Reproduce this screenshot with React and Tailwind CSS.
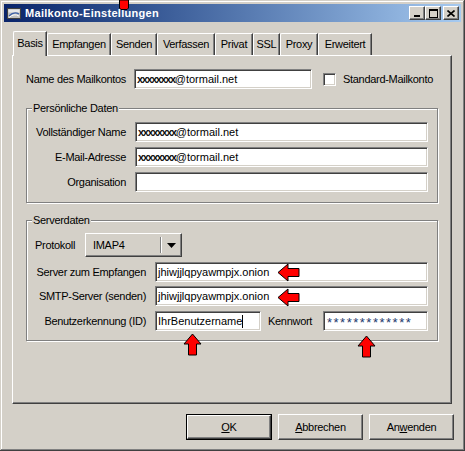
import React from "react";

const sunken =
  "border border-t-[#808080] border-l-[#808080] border-r-white border-b-white shadow-[inset_1px_1px_0_#404040,inset_-1px_-1px_0_#d4d0c8]";
const raised =
  "border border-t-white border-l-white border-r-[#404040] border-b-[#404040] shadow-[inset_-1px_-1px_0_#808080,inset_1px_1px_0_#d4d0c8]";

const tabs = [
  { label: "Basis", w: "w-[34px]", active: true },
  { label: "Empfangen", w: "w-[64px]" },
  { label: "Senden", w: "w-[46px]" },
  { label: "Verfassen", w: "w-[58px]" },
  { label: "Privat", w: "w-[38px]" },
  { label: "SSL", w: "w-[27px]" },
  { label: "Proxy", w: "w-[38px]" },
  { label: "Erweitert", w: "w-[54px]" },
];

export default function App() {
  return (
    <div className="relative w-[465px] h-[451px] bg-[#d4d0c8] p-1 flex flex-col text-[11px] tracking-[-0.3px] text-black font-['Liberation_Sans',Arial,sans-serif] shadow-[inset_-1px_-1px_0_#404040,inset_1px_1px_0_#d4d0c8,inset_-2px_-2px_0_#808080,inset_2px_2px_0_#fff] select-none">
      <TitleBar />

      {/* TABS */}
      <div className="relative z-10 mt-[9px] ml-[9px] flex items-end h-[24px]">
        {tabs.map((t) =>
          t.active ? (
            <div
              key={t.label}
              className={`${t.w} h-[25px] -mb-px bg-[#d4d0c8] border-t border-l border-white border-r border-r-[#404040] shadow-[inset_-1px_0_0_#808080] rounded-tl-[2px] flex items-center justify-center pb-[2px]`}
            >
              {t.label}
            </div>
          ) : (
            <div
              key={t.label}
              className={`${t.w} h-[22px] border-t border-l border-white border-r border-r-[#404040] shadow-[inset_-1px_0_0_#808080] rounded-tl-[2px] flex items-center justify-center whitespace-nowrap`}
            >
              {t.label}
            </div>
          )
        )}
      </div>

      {/* PANEL */}
      <div className="ml-[8px] w-[440px] h-[349px] border border-t-white border-l-white border-r-[#404040] border-b-[#404040] shadow-[inset_-1px_-1px_0_#808080] pt-[13px] pl-[13px]">
        <div className="flex items-center h-[20px]">
          <span className="w-[108px]">Name des Mailkontos</span>
          <TextField w="w-[178px]">
            <Masked />
            @tormail.net
          </TextField>
          <div className={`${sunken} ml-[11px] w-[13px] h-[13px] bg-white`} />
          <span className="ml-[7px]">Standard-Mailkonto</span>
        </div>

        {/* PERSÖNLICHE DATEN */}
        <GroupBox title="Persönliche Daten" className="mt-[19px] h-[95px] pt-[13px]">
          <div className="flex flex-col gap-[5px]">
            <FormRow label="Vollständiger Name">
              <TextField w="w-[293px]">
                <Masked />
                @tormail.net
              </TextField>
            </FormRow>
            <FormRow label="E-Mail-Adresse">
              <TextField w="w-[293px]">
                <Masked />
                @tormail.net
              </TextField>
            </FormRow>
            <FormRow label="Organisation">
              <TextField w="w-[293px]" />
            </FormRow>
          </div>
        </GroupBox>

        {/* SERVERDATEN */}
        <GroupBox title="Serverdaten" className="mt-[17px] h-[121px] pt-[12px]">
          <div className="flex items-center h-[24px]">
            <span className="w-[58px] pl-[8px]">Protokoll</span>
            <div className={`${raised} w-[97px] h-[24px] flex items-center`}>
              <span className="flex-1 pl-[7px]">IMAP4</span>
              <div className="w-px h-[16px] bg-[#808080] shadow-[1px_0_0_#fff]" />
              <div className="w-[20px] flex items-center justify-center">
                <svg width="9" height="5" viewBox="0 0 9 5">
                  <polygon points="0,0 9,0 4.5,5" fill="#000" />
                </svg>
              </div>
            </div>
          </div>

          <div className="mt-[5px] flex items-center h-[20px]">
            <span className="w-[119px] shrink-0 text-right whitespace-nowrap">Server zum Empfangen</span>
            <TextField w="w-[273px] ml-[9px]">jhiwjjlqpyawmpjx.onion</TextField>
          </div>
          <div className="mt-[4px] flex items-center h-[20px]">
            <span className="w-[119px] shrink-0 text-right whitespace-nowrap">SMTP-Server (senden)</span>
            <TextField w="w-[273px] ml-[9px]">jhiwjjlqpyawmpjx.onion</TextField>
          </div>
          <div className="mt-[5px] flex items-center h-[20px]">
            <span className="w-[119px] shrink-0 text-right whitespace-nowrap">Benutzerkennung (ID)</span>
            <TextField w="w-[106px] ml-[9px]">
              IhrBenutzername
              <span className="inline-block w-px h-[13px] bg-black" />
            </TextField>
            <span className="ml-[7px] w-[55px]">Kennwort</span>
            <TextField w="w-[105px]">
              <span className="pl-[1px] text-[13px] tracking-[1.5px] text-[#1c3a6e] leading-none pt-[3px]">
                *************
              </span>
            </TextField>
          </div>
        </GroupBox>
      </div>

      {/* BUTTONS */}
      <div className="mt-[10px] flex justify-end pr-[7px]">
        <div className="border border-black">
          <div className={`${raised} w-[84px] h-[24px] flex items-center justify-center`}>
            <span>
              <u>O</u>K
            </span>
          </div>
        </div>
        <div className={`${raised} ml-[6px] w-[85px] h-[26px] flex items-center justify-center`}>
          <span>
            <u>A</u>bbrechen
          </span>
        </div>
        <div className={`${raised} ml-[6px] w-[85px] h-[26px] flex items-center justify-center`}>
          <span>
            An<u>w</u>enden
          </span>
        </div>
      </div>

      {/* RED MARKER ARROWS */}
      <svg className="absolute left-[119px] top-0" width="10" height="10" viewBox="0 0 10 10">
        <polygon points="0.5,0 9.5,0 9.5,8 8,9.5 2,9.5 0.5,8" fill="#ff0000" stroke="#000" />
      </svg>
      <LeftArrow className="absolute left-[277px] top-[263px]" />
      <LeftArrow className="absolute left-[277px] top-[288px]" />
      <UpArrow className="absolute left-[183px] top-[333px]" />
      <UpArrow className="absolute left-[357px] top-[335px]" />
    </div>
  );
}

function TitleBar() {
  return (
    <div className="h-[18px] bg-linear-to-r from-[#0a246a] to-[#a6caf0] flex items-center pl-[2px] pr-[2px]">
      <svg width="16" height="16" viewBox="0 0 16 16">
        <rect x="1.5" y="3.5" width="13" height="10" fill="#c0c0c0" stroke="#404040" />
        <rect x="2.5" y="4.5" width="11" height="3" fill="#e8e8e8" />
        <path d="M3 11 Q8 6 13 9" stroke="#3a5fa8" strokeWidth="1.2" fill="none" />
        <path d="M3 12.5 Q8 8 13 11" stroke="#ffffff" strokeWidth="1" fill="none" />
      </svg>
      <span className="ml-[3px] text-white font-bold tracking-[0.3px] flex-1">Mailkonto-Einstellungen</span>
      <TitleButton>
        <svg width="8" height="8" viewBox="0 0 8 8">
          <rect x="1" y="6" width="6" height="2" fill="#000" />
        </svg>
      </TitleButton>
      <TitleButton>
        <svg width="9" height="9" viewBox="0 0 9 9">
          <rect x="0.5" y="0.5" width="8" height="8" fill="none" stroke="#000" />
          <rect x="0" y="0" width="9" height="2" fill="#000" />
        </svg>
      </TitleButton>
      <div className="w-[2px]" />
      <TitleButton>
        <svg width="8" height="7" viewBox="0 0 8 7">
          <path d="M0.5 0.5 L7.5 6.5 M7.5 0.5 L0.5 6.5" stroke="#000" strokeWidth="1.6" />
        </svg>
      </TitleButton>
    </div>
  );
}

function TitleButton({ children }) {
  return (
    <div className={`${raised} bg-[#d4d0c8] w-[16px] h-[14px] flex items-center justify-center`}>
      {children}
    </div>
  );
}

function GroupBox({ title, className, children }) {
  return (
    <div
      className={`relative w-[412px] border border-[#808080] shadow-[1px_1px_0_#fff,inset_1px_1px_0_#fff] ${className}`}
    >
      <span className="absolute left-[5px] -top-[8px] px-[1px] bg-[#d4d0c8] leading-[14px]">
        {title}
      </span>
      {children}
    </div>
  );
}

function FormRow({ label, children }) {
  return (
    <div className="flex items-center h-[20px]">
      <span className="w-[99px] shrink-0 text-right whitespace-nowrap">{label}</span>
      <div className="ml-[9px]">{children}</div>
    </div>
  );
}

function TextField({ w, children }) {
  return (
    <div
      className={`${sunken} ${w} h-[20px] bg-white flex items-center pl-[2px] tracking-normal whitespace-nowrap overflow-hidden`}
    >
      {children}
    </div>
  );
}

function Masked() {
  return <span className="font-bold tracking-[-1.4px] text-[#111]">xxxxxxxx</span>;
}

function LeftArrow({ className }) {
  return (
    <svg className={className} width="23" height="19" viewBox="0 0 23 19">
      <polygon points="1,9.5 11,1 11,5.5 22,5.5 22,13.5 11,13.5 11,18" fill="#ff0000" stroke="#000" />
    </svg>
  );
}

function UpArrow({ className }) {
  return (
    <svg className={className} width="19" height="23" viewBox="0 0 19 23">
      <polygon points="9.5,1 18,11 13.5,11 13.5,22 5.5,22 5.5,11 1,11" fill="#ff0000" stroke="#000" />
    </svg>
  );
}
